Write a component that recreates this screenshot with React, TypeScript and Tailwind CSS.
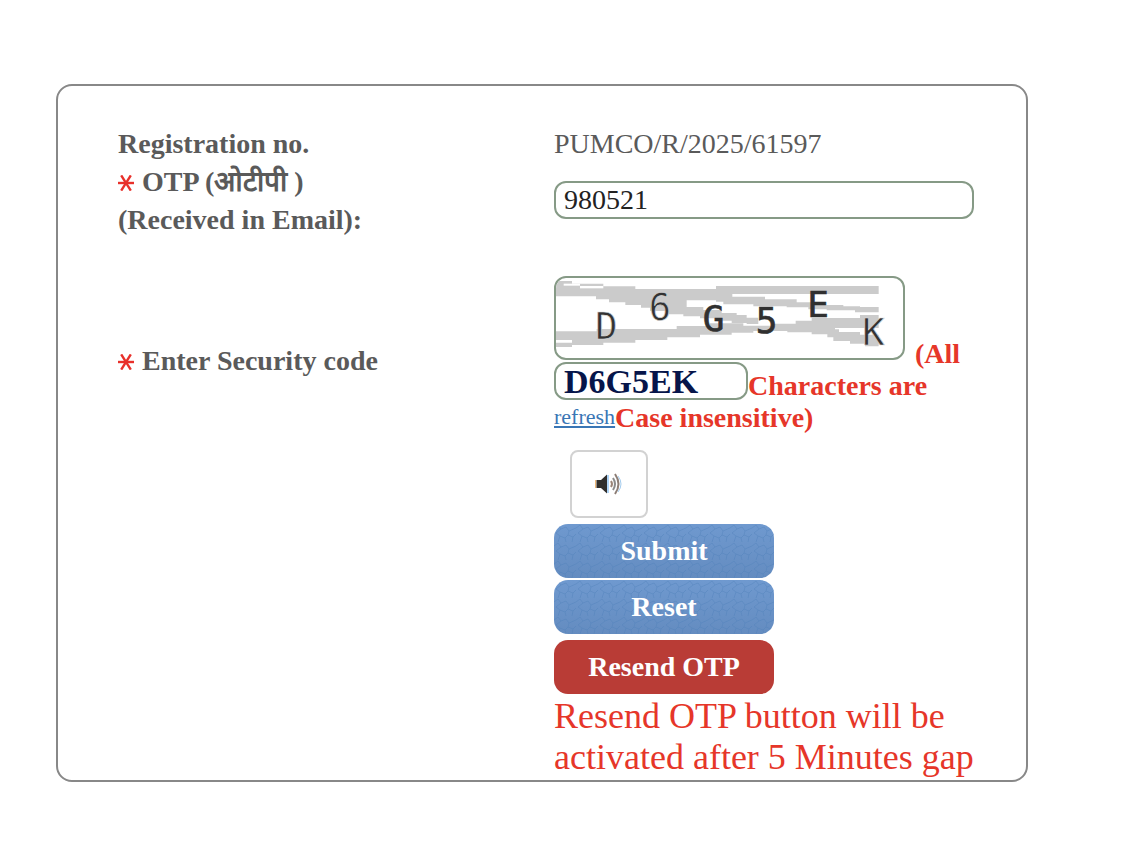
import { useState } from 'react'

const NOTE = 'Resend OTP button will be activated after 5 Minutes gap'

function RequiredMark() {
  return (
    <svg className="mr-2 inline-block h-4 w-4 align-baseline" viewBox="0 0 16 16" role="img" aria-label="required">
      <g stroke="#e8302a" strokeWidth="2.4">
        <path d="M0 8H16" />
        <path d="M3.2 0.4L12.8 15.6" />
        <path d="M12.8 0.4L3.2 15.6" />
      </g>
    </svg>
  )
}

function CaptchaImage() {
  return (
    <svg className="block h-full w-full" viewBox="48 39 1041 240" role="img" aria-label="Security code">
      {/* noise bands */}
      <g fill="#cbcbcb">
        <path d="M48 48H96V56H190V64H286V72H528V63H1016V87H577V95H675V103H770V112H815V120H910V124H960V126H1016V142H945V136H860V133H805V127H740V124H640V118H550V110H528V106H440V118H440V126H490V135H545V144H590V150H620V158H655V177H620V174H575V167H528V160H480V154H430V148H385V138H330V128H303V120H256V112H207V103H168V94H48Z" />
        <path d="M48 199H170V192H410V183H510V175H610V182H700V176H767V167H815V159H960V150H1016V189H885V193H897V201H960V209H1016V244H975V236H930V228H880V217H862V208H815V202H742V198H640V203H575V209H480V217H382V225H286V233H190V240H96V246H48V233H96V225H48Z" />
      </g>
      <g fill="#fff">
        <rect x="71" y="56" width="49" height="6" />
        <rect x="120" y="63" width="70" height="7" />
      </g>
      {/* thin glyphs */}
      <g fill="#333" stroke="#d8d8d8" strokeWidth="2" fontSize="111" fontFamily="'DejaVu Sans Mono', monospace">
        <text x="166" y="223">D</text>
        <text x="326" y="166">6</text>
        <text x="967" y="239">K</text>
      </g>
      {/* heavy glyphs */}
      <g fill="#303030" stroke="#303030" strokeWidth="2" fontSize="108" fontFamily="'DejaVu Sans Mono', monospace">
        <text x="488" y="197">G</text>
        <text x="647" y="205">5</text>
        <text x="802" y="157">E</text>
      </g>
    </svg>
  )
}

function SpeakerIcon() {
  return (
    <svg className="h-6 w-7" viewBox="0 0 28 24" aria-hidden="true">
      <path d="M0.5 8V16" stroke="#f0b978" strokeWidth="1.4" />
      <path d="M1.5 8H6L12 2.5V21.5L6 16H1.5Z" fill="#302e2c" />
      <path d="M13 3V21" stroke="#9dcbf5" strokeWidth="1.6" />
      <g fill="none" strokeWidth="2">
        <path d="M16 9Q18 12 16 15" stroke="#9b8578" />
        <path d="M18 6Q22 12 18 18" stroke="#8a8a8a" />
        <path d="M20 2Q27 12 20 22" stroke="#8c7d75" />
        <path d="M23 4Q29 12 23 20" stroke="#a4ccee" strokeWidth="1" />
      </g>
    </svg>
  )
}

interface BlueButtonProps {
  label: string
  type: 'submit' | 'reset'
}

function BlueButton({ label, type }: BlueButtonProps) {
  const id = `grain-${type}`
  return (
    <button
      type={type}
      className="relative block h-[54px] w-[220px] cursor-pointer overflow-hidden rounded-[14px] bg-linear-to-b from-[#6f99cf] to-[#648cc0] font-bold text-white"
    >
      <svg className="absolute inset-0 h-full w-full" aria-hidden="true">
        <defs>
          <pattern id={id} width="22" height="18" patternUnits="userSpaceOnUse">
            <path
              d="M0 4L4 1L7 5L12 3L15 7L22 4M4 18L6 12L2 9L7 5M6 12L11 14L14 11L15 7M14 11L19 13L22 10M11 14L12 18M19 13L18 18"
              fill="none"
              stroke="#4d7fb9"
              strokeOpacity="0.4"
            />
          </pattern>
        </defs>
        <rect width="100%" height="100%" fill={`url(#${id})`} />
      </svg>
      <span className="relative">{label}</span>
    </button>
  )
}

export default function App() {
  const [otp, setOtp] = useState('980521')
  const [code, setCode] = useState('D6G5EK')

  return (
    <main className="min-h-screen bg-white pt-[84px] pr-28 pl-14 font-['Liberation_Serif',serif] text-[28px] text-[#5a5a5a]">
      <form
        className="rounded-2xl border-2 border-[#888888] pt-[39px] pr-[52px] pl-[60px]"
        onSubmit={(e) => e.preventDefault()}
      >
        <div className="grid grid-cols-[minmax(0,1fr)_420px] items-center leading-[38px]">
          <div className="font-bold">Registration no.</div>
          <div>PUMCO/R/2025/61597</div>

          <label htmlFor="otp" className="font-bold">
            <RequiredMark />
            OTP (ओटीपी )
            <br />
            (Received in Email):
          </label>
          <input
            id="otp"
            value={otp}
            onChange={(e) => setOtp(e.target.value)}
            className="mb-0.5 h-[38px] w-full rounded-xl border-2 border-[#869a86] bg-white px-2 text-[#222222]"
          />
        </div>

        <div className="mt-[37px] grid grid-cols-[minmax(0,1fr)_420px] items-center">
          <label htmlFor="code" className="font-bold">
            <RequiredMark />
            Enter Security code
          </label>
          <div className="flow-root pb-3">
            <div className="float-left mr-2.5 mb-0.5 h-[84px] w-[351px] overflow-hidden rounded-xl border-2 border-[#869a86]">
              <CaptchaImage />
            </div>
            <input
              id="code"
              value={code}
              onChange={(e) => setCode(e.target.value)}
              className="float-left clear-left h-[38px] w-[194px] rounded-xl border-2 border-[#869a86] bg-white px-2 text-[34px] font-bold text-[#06154a]"
            />
            <a href="#refresh" className="float-left clear-left text-[22px] leading-[34px] text-[#3a76b5] underline">
              refresh
            </a>
            <p className="pt-[62px] leading-8 font-bold text-[#e63629]">
              <span>(All</span> <span>Characters are</span> <span>Case insensitive)</span>
            </p>
          </div>
        </div>

        <div className="grid grid-cols-[minmax(0,1fr)_420px]">
          <div className="col-start-2 flex flex-col items-start">
            <button
              type="button"
              aria-label="Play security code"
              className="mt-1 ml-4 flex h-[68px] w-[78px] cursor-pointer items-center justify-center rounded-lg border-2 border-[#d2d2d2] bg-white"
            >
              <SpeakerIcon />
            </button>
            <div className="mt-1.5 flex flex-col gap-0.5">
              <BlueButton type="submit" label="Submit" />
              <BlueButton type="reset" label="Reset" />
            </div>
            <button
              type="button"
              className="mt-1.5 h-[54px] w-[220px] cursor-pointer rounded-[14px] bg-[#b93c36] font-bold text-white"
            >
              Resend OTP
            </button>
            <p className="pt-0.5 pb-0.5 text-[36px] leading-[41px] text-[#e63629]">{NOTE}</p>
          </div>
        </div>
      </form>
    </main>
  )
}
